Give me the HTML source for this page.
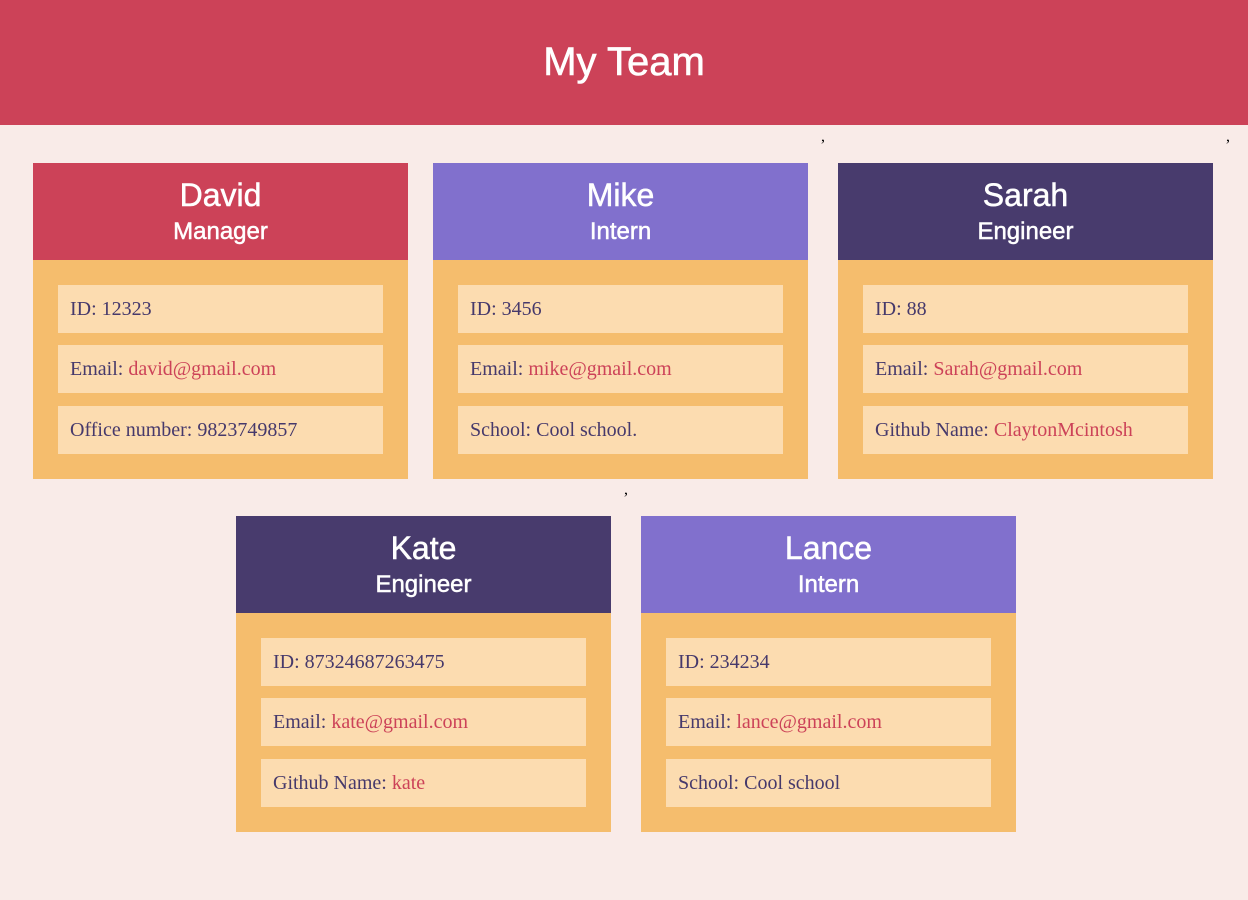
<!DOCTYPE html><html><head><style>
body{margin:0;width:1248px;height:900px;background:#f9ebe8;position:relative;overflow:hidden}
.top{position:absolute;left:0;top:0;width:1248px;height:125px;background:#cc4258;color:#fff;font:40px "Liberation Sans",sans-serif;text-align:center;line-height:125px;-webkit-text-stroke:0.6px #fff}
.c{position:absolute;width:375px;height:316px;background:#f5bd6d}
.h{height:97px;color:#fff;text-align:center;font-family:"Liberation Sans",sans-serif;-webkit-text-stroke:0.5px #fff}
.n{font-size:32px;position:absolute;top:14px;width:100%}
.r{font-size:24px;position:absolute;top:55px;width:100%}
.i{position:absolute;box-sizing:border-box;left:25px;width:325px;height:48px;background:#fcdcb0;padding-left:12px;font:20px/48px "Liberation Serif",serif;color:#46396b}
.i span{color:#cc4258}
.m{background:#cc4258}.in{background:#8170cd}.e{background:#483b6d}
.cm{position:absolute;font:16px "Liberation Serif",serif}
</style></head><body>
<div class="top">My Team</div>
<div class="cm" style="left:821px;top:128px">,</div>
<div class="cm" style="left:1226px;top:128px">,</div>
<div class="cm" style="left:624px;top:481px">,</div>

<div class="c" style="left:33px;top:163px"><div class="h m"><div class="n">David</div><div class="r">Manager</div></div>
<div class="i" style="top:122px">ID: 12323</div><div class="i" style="top:182px">Email: <span>david@gmail.com</span></div><div class="i" style="top:243px">Office number: 9823749857</div></div>

<div class="c" style="left:433px;top:163px"><div class="h in"><div class="n">Mike</div><div class="r">Intern</div></div>
<div class="i" style="top:122px">ID: 3456</div><div class="i" style="top:182px">Email: <span>mike@gmail.com</span></div><div class="i" style="top:243px">School: Cool school.</div></div>

<div class="c" style="left:838px;top:163px"><div class="h e"><div class="n">Sarah</div><div class="r">Engineer</div></div>
<div class="i" style="top:122px">ID: 88</div><div class="i" style="top:182px">Email: <span>Sarah@gmail.com</span></div><div class="i" style="top:243px">Github Name: <span>ClaytonMcintosh</span></div></div>

<div class="c" style="left:236px;top:516px"><div class="h e"><div class="n">Kate</div><div class="r">Engineer</div></div>
<div class="i" style="top:122px">ID: 87324687263475</div><div class="i" style="top:182px">Email: <span>kate@gmail.com</span></div><div class="i" style="top:243px">Github Name: <span>kate</span></div></div>

<div class="c" style="left:641px;top:516px"><div class="h in"><div class="n">Lance</div><div class="r">Intern</div></div>
<div class="i" style="top:122px">ID: 234234</div><div class="i" style="top:182px">Email: <span>lance@gmail.com</span></div><div class="i" style="top:243px">School: Cool school</div></div>
</body></html>
